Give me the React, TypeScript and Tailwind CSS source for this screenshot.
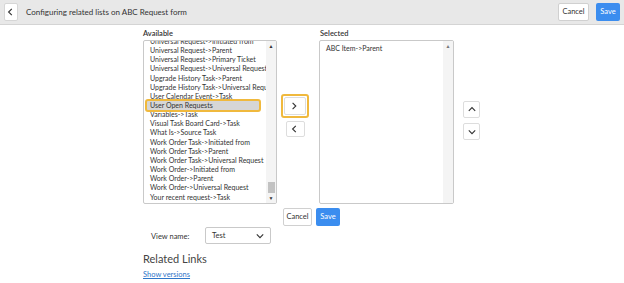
import React from 'react';

const available = [
  'Universal Request->Initiated from',
  'Universal Request->Parent',
  'Universal Request->Primary Ticket',
  'Universal Request->Universal Request',
  'Upgrade History Task->Parent',
  'Upgrade History Task->Universal Request',
  'User Calendar Event->Task',
  'User Open Requests',
  'Variables->Task',
  'Visual Task Board Card->Task',
  'What Is->Source Task',
  'Work Order Task->Initiated from',
  'Work Order Task->Parent',
  'Work Order Task->Universal Request',
  'Work Order->Initiated from',
  'Work Order->Parent',
  'Work Order->Universal Request',
  'Your recent request->Task',
];

const Chevron = ({ dir }: { dir: 'left' | 'right' | 'up' | 'down' }) => {
  const d = {
    left: 'M6 1 L2 5 L6 9',
    right: 'M2 1 L6 5 L2 9',
    up: 'M1 6 L5 2 L9 6',
    down: 'M1 3 L5 7 L9 3',
  }[dir];
  return (
    <svg width="8" height="8" viewBox="0 0 10 10" fill="none" stroke="#333" strokeWidth="1.4">
      <path d={d} />
    </svg>
  );
};

const App = () => {
  return (
    <div className="w-[624px] h-[283px] bg-white overflow-hidden text-[#333]" style={{ fontFamily: 'Lato, "Open Sans", sans-serif' }}>
      {/* Header */}
      <div className="h-[25px] bg-[#e8e8e8] border-b border-[#d4d4d4] flex items-center pl-[4px] pr-[4px]">
        <button className="w-[14px] h-[18px] bg-white border border-[#d6d6d6] rounded-[2px] flex items-center justify-center">
          <Chevron dir="left" />
        </button>
        <span className="ml-[8px] text-[8px] text-[#333]">Configuring related lists on ABC Request form</span>
        <div className="ml-auto flex gap-[7px]">
          <button className="h-[18px] w-[31px] bg-white border border-[#d0d0d0] rounded-[2px] text-[7.5px] text-[#333]">Cancel</button>
          <button className="h-[18px] w-[24px] bg-[#3b8def] rounded-[2px] text-[7.5px] text-white">Save</button>
        </div>
      </div>

      {/* Slushbucket */}
      <div className="flex pl-[143px] pt-[4px]">
        <div className="flex flex-col">
          <span className="text-[7.5px] font-semibold leading-[10px] h-[11px]">Available</span>
          <div className="w-[134px] h-[164px] border border-[#c9c9c9] rounded-[2px] flex overflow-hidden">
            <div className="flex-1 overflow-hidden">
              <div className="-mt-[5px] pl-[6px] pt-[1px]">
                {available.map((item) =>
                  item === 'User Open Requests' ? (
                    <div key={item} className="-ml-[5px] w-[116px] h-[13px] my-[-2px] relative z-10 border-[2px] border-[#f0b93d] rounded-[3px] bg-[#d6d6d6] flex items-center pl-[3px]">
                      <span className="text-[7px] leading-[9px] whitespace-nowrap">{item}</span>
                    </div>
                  ) : (
                    <div key={item} className="text-[7px] leading-[9.15px] whitespace-nowrap">{item}</div>
                  )
                )}
              </div>
            </div>
            <div className="w-[10px] bg-[#f4f4f4] flex flex-col items-center">
              <span className="text-[5px] leading-[8px] mt-[1px]">▲</span>
              <div className="flex-1" />
              <div className="w-[7px] h-[11px] bg-[#c2c2c2]" />
              <span className="text-[5px] leading-[8px] mt-[1px] mb-[1px]">▼</span>
            </div>
          </div>
        </div>

        <div className="w-[42px] flex flex-col items-center pt-[65px] pr-[6px]">
          <div className="w-[28px] h-[24px] border-[2px] border-[#f0b93d] rounded-[3px] flex items-center justify-center">
            <div className="w-[22px] h-[18px] bg-white border border-[#ddd] rounded-[2px] flex items-center justify-center">
              <Chevron dir="right" />
            </div>
          </div>
          <div className="mt-[3px] w-[19px] h-[16px] bg-white border border-[#ddd] rounded-[2px] flex items-center justify-center">
            <Chevron dir="left" />
          </div>
        </div>

        <div className="flex flex-col">
          <span className="text-[7.5px] font-semibold leading-[10px] h-[11px] ml-[1px]">Selected</span>
          <div className="w-[135px] h-[164px] border border-[#c9c9c9] rounded-[2px] flex overflow-hidden">
            <div className="flex-1 pl-[6px] pt-[3px] text-[7px] leading-[9px]">ABC Item-&gt;Parent</div>
            <div className="w-[10px] bg-[#f4f4f4] flex flex-col items-center">
              <span className="text-[5px] leading-[8px] mt-[1px] text-[#777]">▲</span>
            </div>
          </div>
        </div>

        <div className="flex flex-col pl-[9px] pt-[72px] gap-[5px]">
          <div className="w-[17px] h-[17px] bg-white border border-[#ddd] rounded-[2px] flex items-center justify-center">
            <Chevron dir="up" />
          </div>
          <div className="w-[17px] h-[17px] bg-white border border-[#ddd] rounded-[2px] flex items-center justify-center">
            <Chevron dir="down" />
          </div>
        </div>
      </div>

      {/* Bottom buttons */}
      <div className="flex pl-[283px] pt-[4px] gap-[4px]">
        <button className="h-[18px] w-[29px] bg-white border border-[#d0d0d0] rounded-[2px] text-[7.5px] text-[#333]">Cancel</button>
        <button className="h-[18px] w-[24px] bg-[#3b8def] rounded-[2px] text-[7.5px] text-white">Save</button>
      </div>

      {/* View name */}
      <div className="flex items-start pl-[151px] mt-[1px]">
        <span className="text-[7.5px] leading-[9px] mt-[5px] w-[54px]">View name:</span>
        <div className="w-[66px] h-[17px] border border-[#c9c9c9] rounded-[2px] flex items-center px-[6px] text-[7.5px]">
          <span>Test</span>
          <span className="ml-auto"><Chevron dir="down" /></span>
        </div>
      </div>

      {/* Related links */}
      <div className="pl-[143px] pt-[8px]">
        <div className="text-[11px] leading-[14px] text-[#444]">Related Links</div>
        <a className="block mt-[4px] text-[7.5px] leading-[9px] text-[#2f76c9] underline">Show versions</a>
      </div>
    </div>
  );
};

export default App;
